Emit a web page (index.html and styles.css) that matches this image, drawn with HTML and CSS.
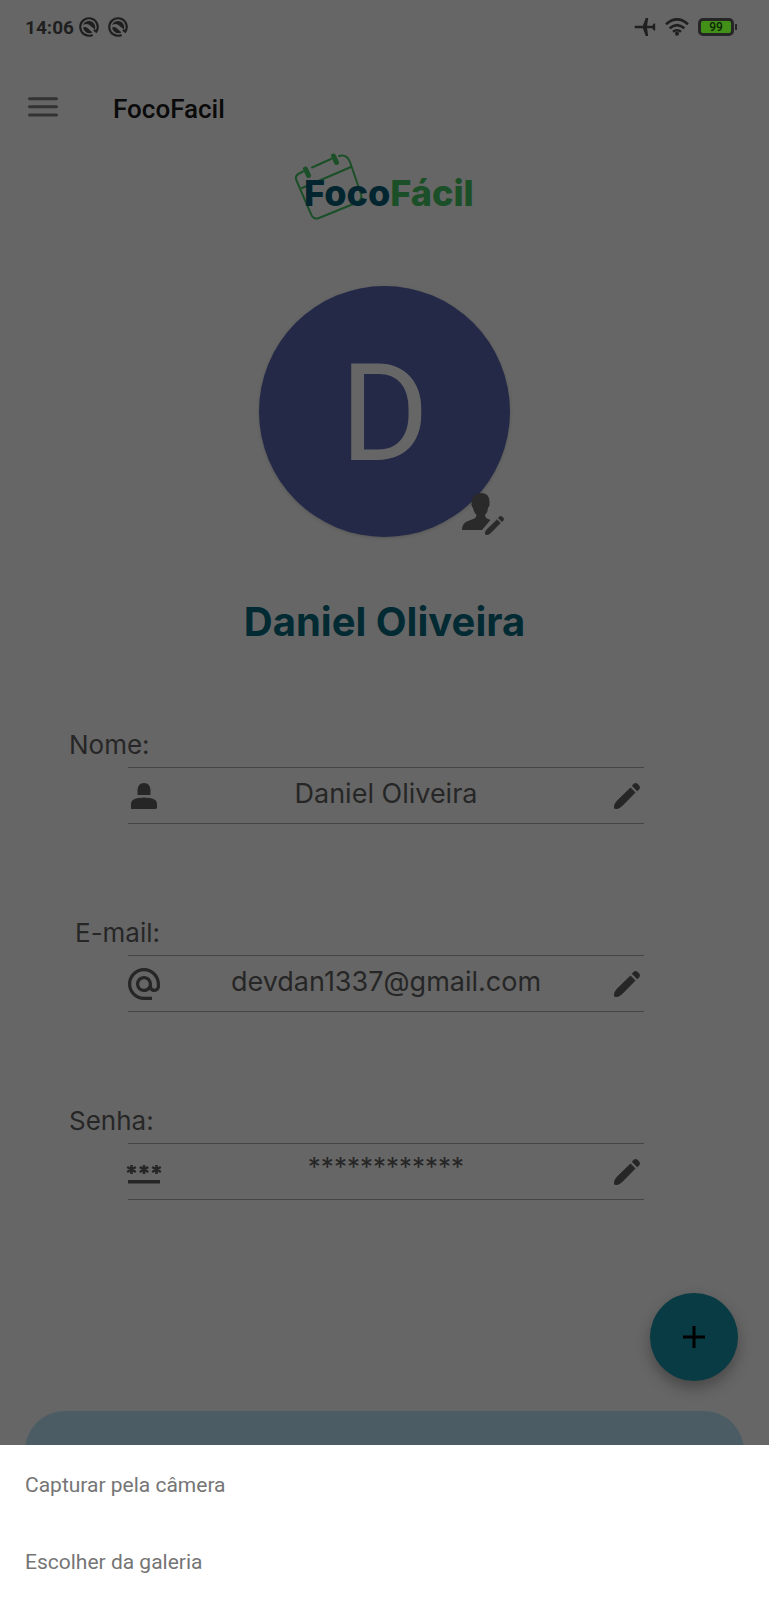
FILE: index.html
```html
<!DOCTYPE html>
<html lang="pt-BR">
<head>
<meta charset="utf-8">
<meta name="viewport" content="width=device-width, initial-scale=1">
<title>FocoFacil</title>
<link rel="stylesheet" href="styles.css">
</head>
<body>
<svg class="defs" aria-hidden="true">
  <symbol id="pencil" viewBox="0 0 26 26">
    <path d="M16.500 5 21 9.500 8 22.800Q5 25.700 1.200 25.800L.3 25Q.2 21 3 18.200Z" stroke="currentColor" stroke-linejoin="round"/>
    <path d="M17.800 2.800 19.800.8Q21.600-.6 23.400.8L25.200 2.600Q26.600 4.400 25.200 6.200L23.200 8.200Z"/>
  </symbol>
  <symbol id="notice" viewBox="0 0 20 20">
    <path d="M13.600 17.900A8.700 8.700 0 1 1 17.300 14.700L15 12.800" fill="none" stroke="currentColor" stroke-width="2.200"/>
    <path d="M4 8.200A6.300 6.300 0 0 1 15.900 12.400L10.400 8Q7.500 6 4 8.200ZM4 10.500Q6.500 9.300 8.500 11L13.500 15.500Q10 17.200 7 15.300L4.800 12.700Z"/>
  </symbol>
</svg>
<div class="screen">
  <header class="status">
    <div class="status-group">
      <span class="clock">14:06</span>
      <svg class="notice"><use href="#notice"/></svg>
      <svg class="notice second"><use href="#notice"/></svg>
    </div>
    <div class="status-group status-right">
      <svg width="21" height="18" viewBox="0 0 21 18"><path d="M0 7.800H7.800L10.800 0H13.200L12.100 7.800H17.200L18.800 5.600H20.200V12.400H18.800L17.200 10.200H12.100L13.200 18H10.800L7.800 10.200H0Q-1 9 0 7.800Z"/></svg>
      <svg width="24" height="18" viewBox="0 0 24 18"><g fill="none" stroke="currentColor" stroke-width="2.600"><path d="M1 6.300Q12-3.400 23 6.300"/><path d="M4.600 10.300Q12 4 19.400 10.300"/><path d="M8 13.800Q12 10.700 16 13.800"/></g><circle cx="12" cy="15.800" r="2"/></svg>
      <div class="battery">99</div>
    </div>
  </header>

  <nav class="toolbar">
    <button class="menu" type="button" aria-label="Menu">
      <svg width="30" height="20" viewBox="0 0 30 20"><path d="M1.500 1.700H28.500M1.500 9.800H28.500M1.500 17.900H28.500" stroke="currentColor" stroke-width="3" stroke-linecap="round"/></svg>
    </button>
    <h1 class="title">FocoFacil</h1>
  </nav>

  <main class="profile">
    <svg class="logo" width="180" height="70" viewBox="0 0 180 70" role="img" aria-label="FocoFácil">
      <g fill="none" stroke="#1b4f27" stroke-width="2" stroke-linecap="round">
        <path d="M8 19.500 5 21Q-.5 23.500 1.300 28L16 62Q18 68 24 66L62 50.500Q68 47 66 42L55 10Q52 2 44 4"/>
        <path d="M17 15.500 36 7M7 36 56 15"/>
      </g>
      <path d="M10.500 17 13.500 23.500M38.500 4 41.500 10.500" stroke="#1b4f27" stroke-width="5" stroke-linecap="round"/>
      <text class="logo-text" x="9" y="54"><tspan fill="#02252f">Foco</tspan><tspan fill="#1b4f27">Fácil</tspan></text>
    </svg>

    <div class="avatar">D
      <button class="avatar-edit" type="button" aria-label="Alterar foto">
        <svg width="42" height="44" viewBox="0 0 42 44"><path d="M0 38Q0 31 6 29L12.500 26.500Q14.500 25.500 14.500 23Q11.500 20 11 16Q9 14 9.500 11Q9.500 1 19 1Q28 1 27.500 11Q28 14 26 16Q26 20 23 23Q23 25.500 25 26.500L28.500 28 20 38Z"/><svg x="23" y="24" width="19" height="19"><use href="#pencil"/></svg></svg>
      </button>
    </div>

    <h2 class="name">Daniel Oliveira</h2>

    <form class="fields">
      <div class="field">
        <label for="nome">Nome:</label>
        <div class="box">
          <svg class="lead" viewBox="0 0 32 32"><path d="M9.500 15V10Q10 3 16 3Q22 3 22.500 10V15ZM3 29V24Q3 17.500 16 17.500Q29 17.500 29 24V28L28 29Z"/></svg>
          <input id="nome" type="text" value="Daniel Oliveira" readonly>
          <button class="edit" type="button" aria-label="Editar nome"><svg><use href="#pencil"/></svg></button>
        </div>
      </div>
      <div class="field">
        <label class="inset" for="email">E-mail:</label>
        <div class="box">
          <svg class="lead" viewBox="2 2 20 20"><path d="M12 2C6.480 2 2 6.480 2 12s4.480 10 10 10h5v-2h-5c-4.340 0-8-3.660-8-8s3.660-8 8-8 8 3.660 8 8v1.430c0 .79-.71 1.570-1.500 1.570s-1.500-.78-1.500-1.570V12c0-2.760-2.240-5-5-5s-5 2.240-5 5 2.240 5 5 5c1.380 0 2.640-.56 3.540-1.470.65.89 1.770 1.470 2.960 1.470 1.970 0 3.500-1.600 3.500-3.570V12c0-5.520-4.480-10-10-10zm0 13c-1.660 0-3-1.340-3-3s1.340-3 3-3 3 1.340 3 3-1.340 3-3 3z"/></svg>
          <input id="email" type="text" value="devdan1337@gmail.com" readonly>
          <button class="edit" type="button" aria-label="Editar e-mail"><svg><use href="#pencil"/></svg></button>
        </div>
      </div>
      <div class="field">
        <label for="senha">Senha:</label>
        <div class="box">
          <svg class="lead" viewBox="0 0 32 32"><path d="M0 24H32V27.500H0Z"/><path d="M3.500 9V18M-.8 11 7.800 16M7.800 11-.8 16M16 9V18M11.700 11 20.300 16M20.300 11 11.700 16M28.500 9V18M24.200 11 32.800 16M32.800 11 24.200 16" stroke="currentColor" stroke-width="2.600"/></svg>
          <input id="senha" class="stars" type="text" value="************" readonly>
          <button class="edit" type="button" aria-label="Editar senha"><svg><use href="#pencil"/></svg></button>
        </div>
      </div>
    </form>

    <button class="fab" type="button" aria-label="Adicionar">
      <svg width="22" height="22" viewBox="0 0 22 22"><path d="M11 0V22M0 11H22" stroke="currentColor" stroke-width="3"/></svg>
    </button>
  </main>
  <div class="tabbar"></div>
</div>
<div class="sheet">
  <button type="button">Capturar pela câmera</button>
  <button type="button">Escolher da galeria</button>
</div>
</body>
</html>
```
FILE: styles.css
```css
* { box-sizing: border-box; }
body {
  margin: 0;
  background: #666;
  color: #262626;
  font-family: Roboto, "Noto Sans", sans-serif;
}
svg { display: block; fill: currentColor; overflow: visible; }
button {
  padding: 0;
  border: 0;
  background: none;
  color: inherit;
  font: inherit;
  cursor: pointer;
}
.defs { position: absolute; width: 0; height: 0; }
.screen { display: flex; flex-direction: column; min-height: 100vh; }

.status {
  display: flex;
  justify-content: space-between;
  align-items: center;
  height: 54px;
  padding: 0 35px 0 25px;
}
.status-group { display: flex; align-items: center; color: #1f1f1f; }
.status-right { gap: 9px; }
.clock { font-size: 19px; font-weight: 700; line-height: 24px; padding-top: 2px; }
.notice { width: 20px; height: 20px; margin-left: 5px; }
.notice.second { margin-left: 9px; }
.battery {
  position: relative;
  width: 36px;
  height: 18px;
  border: 3px solid #262626;
  border-radius: 5px;
  background: #429018;
  color: #0d2403;
  font-size: 12px;
  font-weight: 500;
  line-height: 13px;
  text-align: center;
}
.battery::after {
  content: "";
  position: absolute;
  top: 3px;
  right: -6px;
  width: 2px;
  height: 6px;
  background: #262626;
}

.toolbar {
  display: flex;
  align-items: center;
  gap: 55px;
  height: 98px;
  padding: 12px 28px 0;
}
.menu { padding-bottom: 4px; color: #333; }
.title { margin: 0; color: #0a0a0a; font-size: 26px; font-weight: 500; line-height: 30px; }

.profile { display: flex; flex-direction: column; align-items: center; }
.logo-text { font-family: Inter, sans-serif; font-size: 36px; font-weight: 800; }
.avatar {
  position: relative;
  width: 251px;
  height: 251px;
  margin-top: 64px;
  border-radius: 50%;
  background: #232947;
  box-shadow: 0 1px 3px #555;
  color: #666;
  font-size: 136px;
  line-height: 255px;
  text-align: center;
}
.avatar-edit { position: absolute; right: 6px; bottom: 1px; color: #2a2a2a; }
.name {
  margin: 60px 0 0;
  color: #022a33;
  font: 700 40px/50px Inter, sans-serif;
}

.fields {
  display: flex;
  flex-direction: column;
  gap: 90px;
  align-self: stretch;
  margin-top: 79px;
  padding: 0 125px 0 69px;
}
.field { display: flex; flex-direction: column; }
.field label { align-self: flex-start; height: 41px; }
.field label { font: 400 26px/37px Inter, sans-serif; }
.field .inset { margin-left: 6px; }
.box {
  display: flex;
  align-items: center;
  height: 57px;
  margin-left: 59px;
  border-top: 1px solid #444;
  border-bottom: 1px solid #444;
}
.lead { flex: none; width: 32px; height: 32px; }
.field input {
  flex: 1;
  min-width: 0;
  height: 40px;
  padding: 0 0 4px;
  border: 0;
  outline: 0;
  background: none;
  color: inherit;
  font: 400 27px/36px Inter, sans-serif;
  text-align: center;
}
.field .stars { height: 46px; padding-bottom: 10px; font-size: 26px; }
.edit { flex: none; padding: 0 4px 0 2px; }
.edit svg { width: 26px; height: 26px; }

.fab {
  display: grid;
  place-items: center;
  align-self: flex-end;
  width: 88px;
  height: 88px;
  margin: 93px 31px 30px 0;
  border-radius: 50%;
  background: #083b44;
  box-shadow: 0 7px 14px rgb(40 35 35 / 45%);
  color: #000;
}
.tabbar {
  flex: 1;
  min-height: 120px;
  margin: 0 25px;
  border-radius: 40px 40px 0 0;
  background: #4b5c65;
}
.sheet {
  position: fixed;
  inset: auto 0 0;
  display: flex;
  flex-direction: column;
  padding-top: 1px;
  background: #fff;
  color: #757575;
}
.sheet button {
  height: 77px;
  padding: 0 25px;
  font-size: 21px;
  line-height: 28px;
  text-align: left;
}
```
